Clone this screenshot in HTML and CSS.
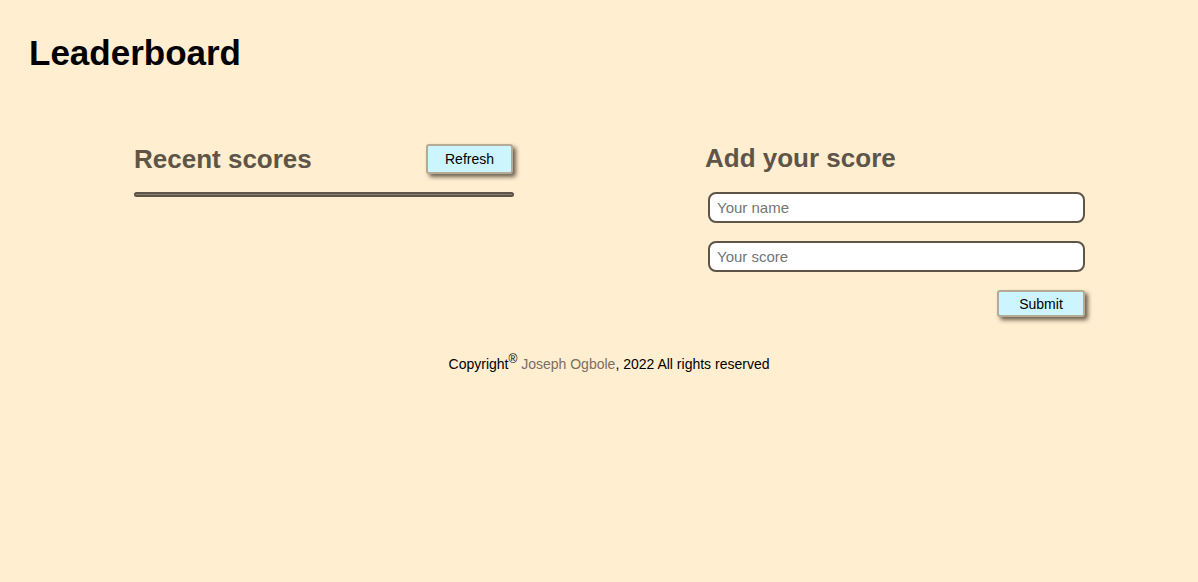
FILE: index.html
```html
<!DOCTYPE html>
<html lang="en">
<head>
<meta charset="utf-8">
<title>Leaderboard</title>
<link rel="stylesheet" href="styles.css">
</head>
<body>
<header class="site-header">
  <h1 class="title">Leaderboard</h1>
</header>
<main class="board">
  <section class="recent">
    <div class="recent-head">
      <h2 class="section-title">Recent scores</h2>
      <button class="btn" type="button">Refresh</button>
    </div>
    <ul class="scores"></ul>
  </section>
  <section class="add">
    <h2 class="section-title">Add your score</h2>
    <form class="score-form">
      <input class="field" type="text" placeholder="Your name">
      <input class="field" type="text" placeholder="Your score">
      <div class="form-actions">
        <button class="btn" type="button">Submit</button>
      </div>
    </form>
  </section>
</main>
<footer class="footer">
  <p class="copy">Copyright<sup>®</sup> <span class="author">Joseph Ogbole</span>, 2022 All rights reserved</p>
</footer>
</body>
</html>
```

FILE: styles.css
```css
html, body {
  margin: 0;
  padding: 0;
}
body {
  background: #ffeed0;
  font-family: "Liberation Sans", Arial, sans-serif;
  color: #000;
}
.site-header {
  padding: 33px 29px 0;
}
.title {
  margin: 0;
  font-size: 35px;
  line-height: 40px;
  font-weight: 700;
}
.board {
  display: flex;
  justify-content: space-between;
  width: 951px;
  margin: 70px 0 0 134px;
}
.recent {
  width: 380px;
}
.recent-head {
  display: flex;
  justify-content: space-between;
  align-items: center;
  height: 32px;
}
.section-title {
  margin: 0;
  font-size: 26px;
  line-height: 30px;
  font-weight: 700;
  color: #5e5548;
}
.btn {
  font-family: "Liberation Sans", Arial, sans-serif;
  font-size: 14px;
  color: #000;
  background: #ccf5ff;
  border: 2px solid #b5ab94;
  border-radius: 3px;
  box-shadow: 3px 3px 4px rgba(60, 50, 35, 0.75);
  padding: 0;
  cursor: pointer;
}
.recent-head .btn {
  width: 87px;
  height: 30px;
  margin-right: 1px;
}
.scores {
  list-style: none;
  margin: 17px 0 0;
  padding: 0;
  height: 1px;
  border: 2px solid #5e5548;
  border-radius: 3px;
  background: #8a8070;
}
.add {
  width: 380px;
}
.add .section-title {
  height: 32px;
  line-height: 30px;
}
.score-form {
  display: flex;
  flex-direction: column;
  gap: 18px;
  margin: 17px 0 0 3px;
}
.field {
  box-sizing: border-box;
  width: 377px;
  height: 31px;
  border: 2px solid #5e5548;
  border-radius: 8px;
  background: #fff;
  font-family: "Liberation Sans", Arial, sans-serif;
  font-size: 15px;
  padding: 0 7px;
  color: #000;
}
.field::placeholder {
  color: #757575;
}
.form-actions {
  display: flex;
  justify-content: flex-end;
}
.form-actions .btn {
  width: 88px;
  height: 27px;
}
.footer {
  margin-top: 38px;
  padding-left: 20px;
  text-align: center;
}
.copy {
  margin: 0;
  font-size: 14px;
  line-height: 18px;
}
.copy sup {
  font-size: 12px;
  line-height: 0;
}
.author {
  color: #7a6f63;
}
```
